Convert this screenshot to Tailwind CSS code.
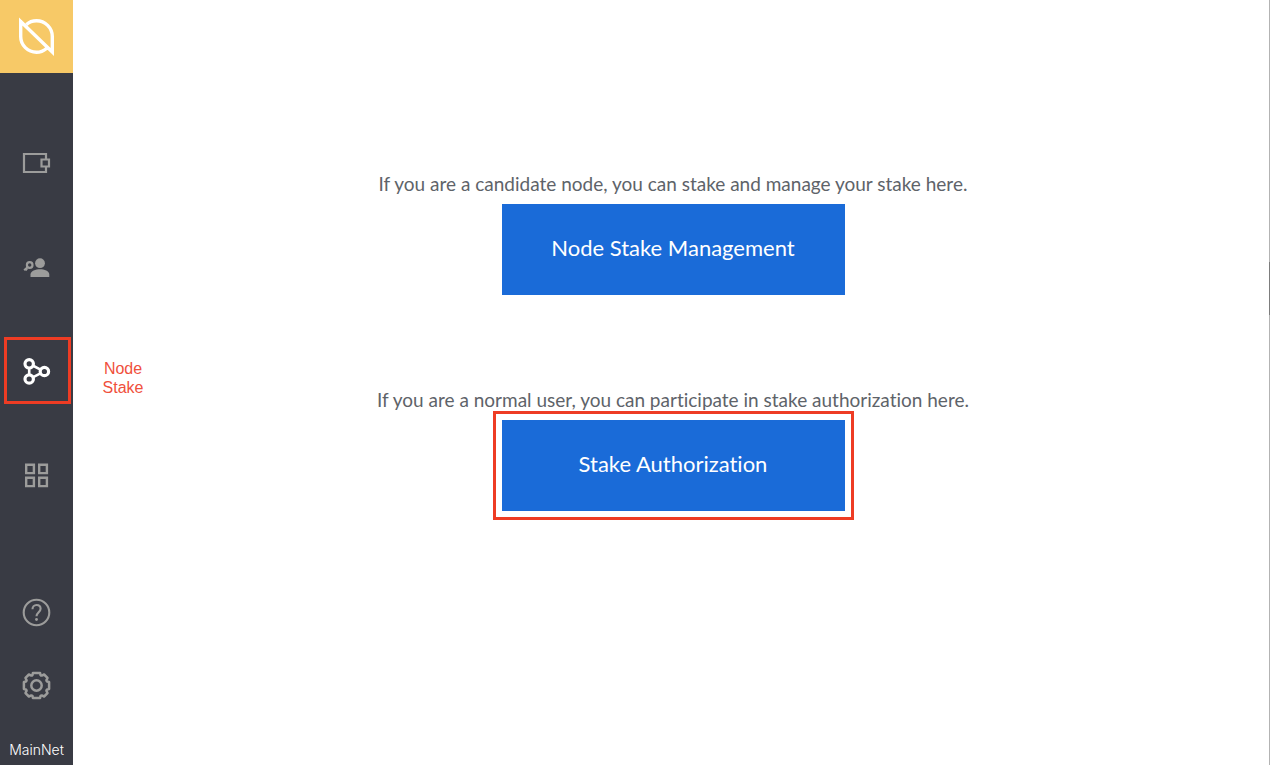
<!DOCTYPE html>
<html lang="en">
<head>
<meta charset="utf-8">
<meta name="viewport" content="width=device-width, initial-scale=1">
<title>Node Stake</title>
<script src="https://cdn.jsdelivr.net/npm/@tailwindcss/browser@4"></script>
</head>
<body class="flex min-h-screen bg-white font-['Lato',sans-serif] [font-variant-ligatures:none]">
<aside class="flex w-[73px] shrink-0 flex-col bg-[#393b44] text-[#9c9c9b]">
  <a href="#" aria-label="Home" class="block bg-[#f7c967] text-white">
    <svg class="block size-[73px]" viewBox="0 0 73 73" fill="none" stroke="currentColor" stroke-width="3.400" stroke-linejoin="miter"><path d="M20.700 21.500V36.500A15.800 15.800 0 0 0 36.500 52.300Q42 52.300 46.500 48.500M20.700 21.500L52.300 52V36.500A15.800 15.800 0 0 0 36.500 20.700Q30.500 20.700 26.500 24.500M46.500 46.400L20.700 21.500V30"/></svg>
  </a>
  <nav class="flex flex-col pt-[38px]" aria-label="Main">
    <a href="#" aria-label="Wallet" class="flex h-[104px] items-center justify-center">
      <svg class="size-[33px]" viewBox="0 0 33 33" fill="none" stroke="currentColor" stroke-width="2.200"><path d="M26 12.500V7H4v18H26v-5M21.500 12.500h7.500v7h-7.500z"/></svg>
    </a>
    <a href="#" aria-label="Identity" class="flex h-[104px] items-center justify-center">
      <svg class="size-[33px]" viewBox="0 0 33 33" fill="currentColor"><circle cx="20" cy="12.200" r="4.900"/><path d="M10.500 26v-2.600c0-3.400 5.200-5.200 9.500-5.200s9.300 1.800 9.300 5.200V26z"/><g fill="none" stroke="currentColor" stroke-width="2.200"><circle cx="9.700" cy="14" r="2.800"/><path d="M7.800 16l-3.600 3.300M5.300 17.400l1.800 1.700"/></g></svg>
    </a>
    <a href="#" aria-label="Node Stake" class="relative flex h-[104px] items-center justify-center text-white">
      <svg class="size-[33px]" viewBox="0 0 33 33" fill="none" stroke="currentColor" stroke-width="3.200"><circle cx="9.200" cy="8.800" r="4.200"/><circle cx="9.200" cy="24" r="4.200"/><circle cx="24.400" cy="16.500" r="4.200"/><path stroke-width="2.600" d="M9.200 13v7M12.700 10.500l8.300 4.300M12.700 22.300l8.300-4.200"/></svg>
      <span class="absolute top-[18px] left-1 size-[67px] border-3 border-[#ee3c24]"></span>
      <span class="absolute top-10 left-[93px] w-15 text-center font-['Liberation_Sans',sans-serif] text-base leading-[19px] text-[#f0503c]">Node<br>Stake</span>
    </a>
    <a href="#" aria-label="Apps" class="flex h-[104px] items-center justify-center">
      <svg class="size-[33px]" viewBox="0 0 33 33" fill="none" stroke="currentColor" stroke-width="2.400"><path d="M6.200 5.800h7.700v8.300H6.200zM19.200 5.800h7.700v8.300h-7.700zM6.200 18.800h7.700v8.300H6.200zM19.200 18.800h7.700v8.300h-7.700z"/></svg>
    </a>
  </nav>
  <div class="mt-auto flex flex-col pb-[5px]">
    <a href="#" aria-label="Help" class="flex h-[73px] items-center justify-center">
      <svg class="size-[33px]" viewBox="0 0 33 33" fill="none" stroke="currentColor" stroke-width="2.100"><circle cx="16.500" cy="16.500" r="12.800"/><path d="M12.500 13.300c0-2.500 1.600-4.300 4.100-4.300s4 1.700 4 3.800c0 3.300-4.100 3.700-4.100 7.500"/><circle cx="16.500" cy="23.500" r="1.400" fill="currentColor" stroke="none"/></svg>
    </a>
    <a href="#" aria-label="Settings" class="flex h-[73px] items-center justify-center">
      <svg class="size-[33px]" viewBox="-16.500 -16.500 33 33" fill="none" stroke="currentColor" stroke-width="2.500" stroke-linejoin="round"><circle r="5.200"/><path d="M12.600-3.600V3.600L10.600 4Q9.900 4.500 9.900 5.200L11 7.600L7.600 11L5.200 9.900Q4.500 9.900 4 10.600L3.600 12.600H-3.600L-4 10.600Q-4.500 9.900-5.200 9.900L-7.600 11L-11 7.600L-9.900 5.200Q-9.900 4.500-10.600 4L-12.600 3.600V-3.600L-10.600-4Q-9.900-4.500-9.900-5.200L-11-7.600L-7.600-11L-5.200-9.900Q-4.500-9.900-4-10.600L-3.600-12.600H3.600L4-10.600Q4.500-9.900 5.200-9.900L7.600-11L11-7.600L9.900-5.200Q9.900-4.500 10.600-4z"/></svg>
    </a>
    <span class="mt-[18px] text-center font-['Inter',sans-serif] text-sm leading-5 font-light text-white">MainNet</span>
  </div>
</aside>
<main class="relative flex flex-1 flex-col items-center gap-[85px] border-r border-[#b3b3b3] pt-[164px] pl-1 text-[#5e6369]">
  <section class="flex flex-col items-center">
    <p class="text-[19px] leading-10">If you are a candidate node, you can stake and manage your stake here.</p>
    <button type="button" class="h-[91px] w-[343px] bg-[#1a6bd8] pb-1 text-[22px] text-white">Node Stake Management</button>
  </section>
  <section class="flex flex-col items-center">
    <p class="text-[19px] leading-10">If you are a normal user, you can participate in stake authorization here.</p>
    <button type="button" class="h-[91px] w-[343px] bg-[#1a6bd8] pb-1 text-[22px] text-white outline-3 outline-offset-6 outline-[#ee3c24]">Stake Authorization</button>
  </section>
  <span class="absolute top-[262px] -right-px h-[53px] w-px bg-[#7d7d7d]"></span>
</main>
</body>
</html>
